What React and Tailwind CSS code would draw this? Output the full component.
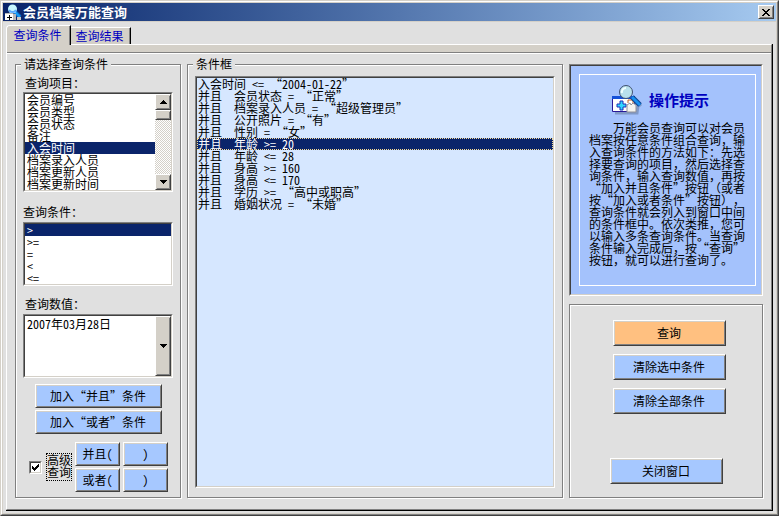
import React from "react";

const raised =
  "border border-t-white border-l-white border-r-[#404040] border-b-[#404040] shadow-[inset_1px_1px_0_#d4d0c8,inset_-1px_-1px_0_#808080]";
const sunken =
  "border border-t-[#808080] border-l-[#808080] border-r-white border-b-white";
const sunkenInner =
  "border border-t-[#404040] border-l-[#404040] border-r-[#d4d0c8] border-b-[#d4d0c8]";
const etched =
  "border border-[#808080] shadow-[inset_1px_1px_0_#fff,1px_1px_0_#fff]";
const listOption =
  "flex items-center min-h-0 h-3 pt-0 pb-px text-xs leading-3 text-black checked:bg-[#0a246a] checked:text-white";

const fields = ["会员编号", "会员类型", "会员状态", "备注", "入会时间", "档案录入人员", "档案更新人员", "档案更新时间"];
const operators = [">", ">=", "=", "<", "<="];
const conditions = [
  "入会时间 <= “2004-01-22”",
  "并且\u00a0\u00a0会员状态 = “正常”",
  "并且\u00a0\u00a0档案录入人员 = “超级管理员”",
  "并且\u00a0\u00a0公开照片 = “有”",
  "并且\u00a0\u00a0性别 = “女”",
  "并且\u00a0\u00a0年龄 >= 20",
  "并且\u00a0\u00a0年龄 <= 28",
  "并且\u00a0\u00a0身高 >= 160",
  "并且\u00a0\u00a0身高 <= 170",
  "并且\u00a0\u00a0学历 >= “高中或职高”",
  "并且\u00a0\u00a0婚姻状况 = “未婚”",
];

function Arrow({ up = false }) {
  return (
    <svg width="7" height="4" viewBox="0 0 7 4" shapeRendering="crispEdges" aria-hidden="true">
      <path d={up ? "M3 0h1v1h1v1h1v1h1v1H0V3h1V2h1V1h1z" : "M0 0h7v1H6v1H5v1H4v1H3V3H2V2H1V1H0z"} />
    </svg>
  );
}

function PushButton({ className = "", tone = "bg-[#a6c8ff]", children, ...rest }) {
  return (
    <button type="button" className={`${raised} ${tone} whitespace-pre text-center leading-4 ${className}`} {...rest}>
      {children}
    </button>
  );
}

function ListBox({ id, label, items, selected, children }) {
  return (
    <div className={sunken}>
      <div className={`${sunkenInner} flex bg-white`}>
        <select
          id={id}
          aria-label={label}
          size={items.length}
          defaultValue={selected}
          className="block min-w-0 flex-1 appearance-none overflow-hidden border-0 bg-transparent p-0 text-xs leading-3 outline-none"
        >
          {items.map((item) => (
            <option key={item} value={item} className={`${listOption} px-0.5`}>
              {item}
            </option>
          ))}
        </select>
        {children}
      </div>
    </div>
  );
}

function AppIcon() {
  return (
    <svg width="17" height="17" viewBox="0 0 17 17" aria-hidden="true">
      <path d="M10 8l5 5" stroke="#0868c8" strokeWidth="4" />
      <path d="M10 8l5 5" stroke="#18a0f8" strokeWidth="2" />
      <circle cx="7.5" cy="5" r="4.5" fill="#c8f8ff" />
      <path d="M4 6a4 4 0 0 0 7 0" fill="none" stroke="#58a8ff" strokeWidth="2" />
      <path d="M12 13h4v3h-4z" fill="#c8c8c8" />
      <path d="M0 9h8v7H0z" fill="#fff" />
      <path d="M0 9h8v1H0zM8 10h3v6H8z" fill="#b8b8b8" />
      <path d="M3 11h2v2h2v1H5v2H4v-2H2v-1h2v-2z" fill="#000" />
    </svg>
  );
}

function TipIcon() {
  return (
    <svg width="32" height="30" viewBox="0 0 32 30" aria-hidden="true">
      <path d="M4 28h22l1-7M22 13l8 8" fill="none" stroke="#7088b0" strokeWidth="3" opacity=".7" />
      <path d="M1.5 11.5h22v15h-22z" fill="#fff" stroke="#281898" />
      <path d="M1 11h23v3H1z" fill="#1450d8" />
      <path d="M9 16h3v3h3v3h-3v3H9v-3H6v-3h3z" fill="#30d8ff" stroke="#1830b8" />
      <path d="M16 27v-7l3-2 1 2 2-2 3 2v7z" fill="#f4f4f0" stroke="#909098" />
      <path d="M17 18v-3h5v3" fill="none" stroke="#c06020" />
      <path d="M21 12l8 8" stroke="#0b3f88" strokeWidth="5" />
      <path d="M21 12l8 8" stroke="#1890f0" strokeWidth="3" />
      <circle cx="15" cy="7" r="6.5" fill="#b8e0ec" stroke="#405070" />
      <path d="M11 8a4 4 0 0 1 4-5" fill="none" stroke="#f0ffff" strokeWidth="2" />
    </svg>
  );
}

export default function App() {
  return (
    <div
      lang="zh-CN"
      className="flex min-h-screen flex-col border border-t-[#d4d0c8] border-l-[#d4d0c8] border-r-[#404040] border-b-[#404040] bg-[#e0e0e0] font-['Noto_Sans_Mono_CJK_SC','Noto_Sans_CJK_SC',monospace] text-xs leading-3 text-black [text-spacing-trim:space-all]"
    >
      <div className="flex flex-1 flex-col border border-t-white border-l-white border-r-[#808080] border-b-[#808080]">
        <div className="flex flex-1 flex-col border border-[#d4d0c8]">
          <header className="flex h-[18px] items-center bg-linear-to-r from-[#0a246a] to-[#a6caf0] px-0.5 text-white">
            <AppIcon />
            <h1 className="ml-px flex-1 text-[13px] leading-4 font-bold">会员档案万能查询</h1>
            <button type="button" aria-label="关闭" className={`${raised} flex h-3.5 w-4 items-center justify-center bg-[#d4d0c8]`}>
              <svg width="8" height="7" viewBox="0 0 8 7" shapeRendering="crispEdges" aria-hidden="true">
                <path d="M0 0h2v1h1v1h2V1h1V0h2v1H7v1H6v1H5v1h1v1h1v1h1v1H6V6H5V5H3v1H2v1H0V6h1V5h1V4h1V3H2V2H1V1H0z" />
              </svg>
            </button>
          </header>

          <main className="flex flex-1 flex-col border-t border-[#d4d0c8] px-[3px] pb-0.5">
            <div role="tablist" className="flex h-[22px] items-end">
              <button
                type="button"
                role="tab"
                aria-selected="true"
                className="relative -mb-px h-5 w-[65px] rounded-tl-sm border-t border-r border-l border-t-white border-r-black border-l-white bg-[#d4d0c8] pr-0.5 pb-0.5 text-center text-[#0000c0] shadow-[inset_-1px_0_0_#808080]"
              >
                查询条件
              </button>
              <button
                type="button"
                role="tab"
                aria-selected="false"
                className="h-[17px] w-[60px] border-t border-r border-t-white border-r-black bg-[#d4d0c8] pr-0.5 text-center text-[#0000c0] shadow-[inset_-1px_0_0_#808080]"
              >
                查询结果
              </button>
            </div>

            <div className="flex flex-1 flex-col border-r border-b border-r-black border-b-black">
              <div className="flex flex-1 flex-col border border-t-white border-l-white border-r-[#808080] border-b-[#808080]">
                <div className="h-2 shrink-0 border-b border-[#808080] bg-[#d4d0c8]" />
                <div className="flex flex-1 gap-1.5 border-t border-white px-2 pt-1 pb-[11px]">
                  <fieldset className={`${etched} w-[166px] shrink-0 px-[5px] pb-1`}>
                    <legend className="bg-[#e0e0e0] px-[3px]">请选择查询条件</legend>
                    <div className="flex flex-col px-0.5 pt-[7px]">
                      <label htmlFor="field" className="mb-[3px] pl-0.5">查询项目：</label>
                      <ListBox id="field" items={fields} selected="入会时间">
                        <div className="flex w-4 flex-col bg-[repeating-conic-gradient(#d4d0c8_0_25%,#fff_0_50%)] bg-size-[2px_2px]">
                          <button type="button" aria-label="向上滚动" className={`${raised} flex h-4 items-center justify-center bg-[#d4d0c8]`}>
                            <Arrow up />
                          </button>
                          <div className={`${raised} h-2.5 bg-[#d4d0c8]`} />
                          <button type="button" aria-label="向下滚动" className={`${raised} mt-auto flex h-4 items-center justify-center bg-[#d4d0c8]`}>
                            <Arrow />
                          </button>
                        </div>
                      </ListBox>
                      <label htmlFor="operator" className="mt-3.5 mb-1">查询条件：</label>
                      <ListBox id="operator" items={operators} selected=">" />
                      <label htmlFor="value" className="mt-3 mb-1 pl-0.5">查询数值：</label>
                      <div className={sunken}>
                        <div className={`${sunkenInner} flex h-[62px] bg-white`}>
                          <select id="value" className="h-4 min-w-0 flex-1 appearance-none border-0 bg-transparent p-0 px-0.5 text-xs leading-4 outline-none">
                            <option>2007年03月28日</option>
                          </select>
                          <button type="button" aria-label="展开日期" className={`${raised} flex w-4 items-center justify-center bg-[#d4d0c8]`}>
                            <Arrow />
                          </button>
                        </div>
                      </div>
                      <div className="mt-1.5 flex flex-col items-center gap-0.5">
                        <PushButton className="h-6 w-[127px]">加入“并且”条件</PushButton>
                        <PushButton className="h-6 w-[127px]">加入“或者”条件</PushButton>
                      </div>
                      <div className="mt-2 flex items-center pl-1.5">
                        <input id="advanced" type="checkbox" defaultChecked className="peer sr-only" />
                        <label htmlFor="advanced" className="flex items-center gap-1 peer-not-checked:[&_svg]:invisible">
                          <span className={`${sunken} block`}>
                            <span className={`${sunkenInner} flex size-[11px] items-center justify-center bg-white`}>
                              <svg width="7" height="7" viewBox="0 0 7 7" shapeRendering="crispEdges" aria-hidden="true">
                                <path d="M0 2h1v1h1v1h1V3h1V2h1V1h1V0h1v3H6v1H5v1H4v1H3v1H2V6H1V5H0z" />
                              </svg>
                            </span>
                          </span>
                          <span className="w-[26px] border border-dotted border-black pb-0.5">高级查询</span>
                        </label>
                        <div className="ml-[3px] grid grid-cols-2 gap-x-[3px] gap-y-0.5">
                          <PushButton className="h-6 w-[45px]">并且(</PushButton>
                          <PushButton className="h-6 w-[45px]">)</PushButton>
                          <PushButton className="h-6 w-[45px]">或者(</PushButton>
                          <PushButton className="h-6 w-[45px]">)</PushButton>
                        </div>
                      </div>
                    </div>
                  </fieldset>

                  <fieldset className={`${etched} flex min-w-0 flex-1 flex-col px-[5px]`}>
                    <legend className="bg-[#e0e0e0] px-[3px]">条件框</legend>
                    <div className="flex h-full flex-col px-0.5 pt-1.5 pb-[9px]">
                      <div className={`${sunken} flex flex-1`}>
                        <div className={`${sunkenInner} flex flex-1 bg-[#d6e7ff]`}>
                          <select
                            aria-label="条件框"
                            size={11}
                            defaultValue={conditions[5]}
                            className="block h-full w-full appearance-none overflow-hidden border-0 bg-transparent p-0 text-xs leading-3 outline-none"
                          >
                            {conditions.map((c) => (
                              <option
                                key={c}
                                value={c}
                                className={`${listOption} px-px checked:outline checked:-outline-offset-1 checked:outline-dotted checked:outline-[#f5db95]`}
                              >
                                {c}
                              </option>
                            ))}
                          </select>
                        </div>
                      </div>
                    </div>
                  </fieldset>

                  <div className="flex w-[194px] shrink-0 flex-col gap-2 pt-1.5">
                    <section className={sunken}>
                      <div className={`${sunkenInner} bg-[#a4c2fc] p-2 pr-[5px]`}>
                        <div className="border border-white px-[9px] pt-[7px] pb-[19px]">
                          <div className="flex h-9 items-center gap-1.5 pl-[22px]">
                            <TipIcon />
                            <h2 className="text-[15px] leading-4 font-bold text-[#0000c0]">操作提示</h2>
                          </div>
                          <p className="mt-1 w-[156px] indent-6">
                            万能会员查询可以对会员档案按任意条件组合查询，输入查询条件的方法如下：先选择要查询的项目，然后选择查询条件，输入查询数值，再按“加入并且条件”按钮（或者按“加入或者条件”按钮），查询条件就会列入到窗口中间的条件框中。依次类推，您可以输入多条查询条件。当查询条件输入完成后，按“查询”按钮，就可以进行查询了。
                          </p>
                        </div>
                      </div>
                    </section>
                    <section className={`${etched} flex flex-1 flex-col items-center pt-[15px] pb-[13px]`}>
                      <div className="flex flex-col gap-2 pl-1.5">
                        <PushButton className="h-[26px] w-[113px]" tone="bg-[#ffc080]">查询</PushButton>
                        <PushButton className="h-[26px] w-[113px]">清除选中条件</PushButton>
                        <PushButton className="h-[26px] w-[113px]">清除全部条件</PushButton>
                      </div>
                      <PushButton className="mt-auto h-[26px] w-[113px]">关闭窗口</PushButton>
                    </section>
                  </div>
                </div>
              </div>
            </div>
          </main>
        </div>
      </div>
    </div>
  );
}
